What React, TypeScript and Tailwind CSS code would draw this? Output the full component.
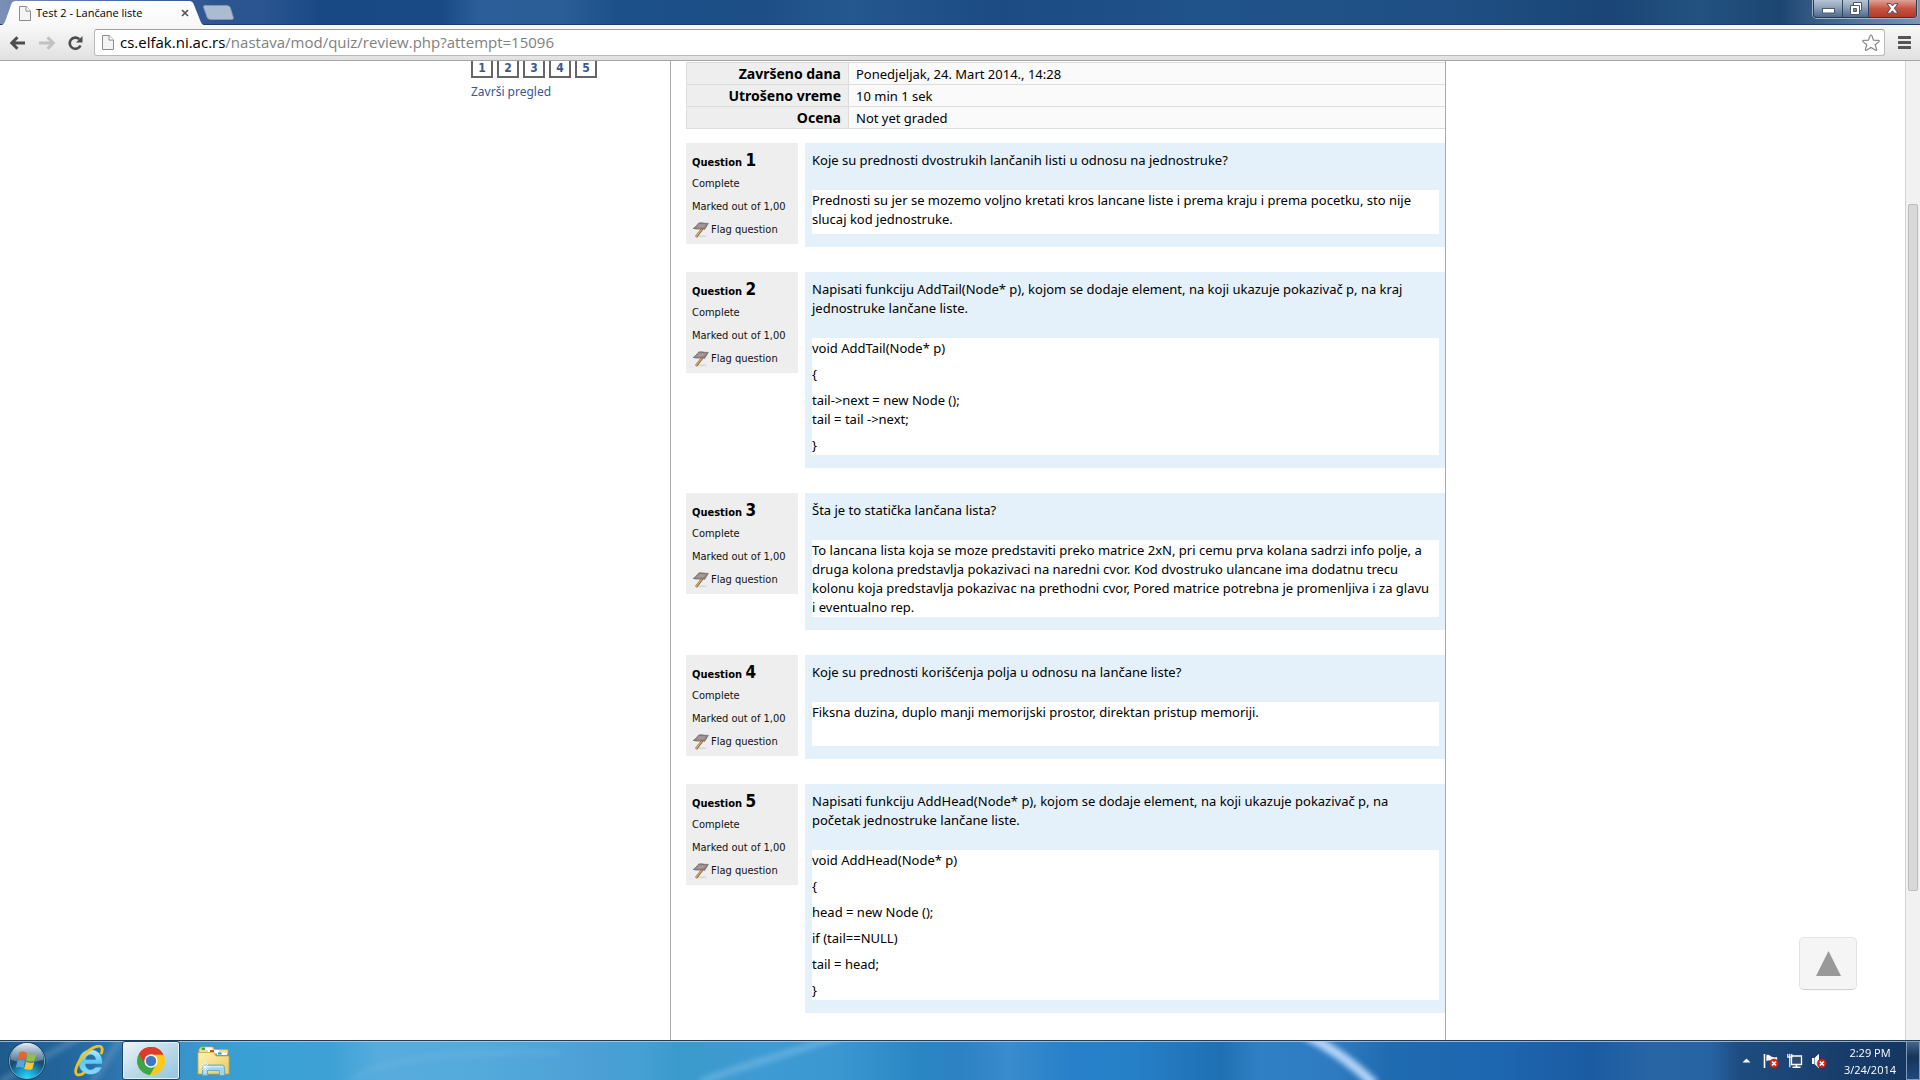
import React from 'react';

type Question = {
  number: number;
  prompt: string[];
  answer: string[][];
};

const summary = [
  { label: 'Završeno dana', value: 'Ponedjeljak, 24. Mart 2014., 14:28' },
  { label: 'Utrošeno vreme', value: '10 min 1 sek' },
  { label: 'Ocena', value: 'Not yet graded' },
];

const questions: Question[] = [
  {
    number: 1,
    prompt: ['Koje su prednosti dvostrukih lančanih listi u odnosu na jednostruke?'],
    answer: [
      [
        'Prednosti su jer se mozemo voljno kretati kros lancane liste i prema kraju i prema pocetku, sto nije',
        'slucaj kod jednostruke.',
      ],
    ],
  },
  {
    number: 2,
    prompt: [
      'Napisati funkciju AddTail(Node* p), kojom se dodaje element, na koji ukazuje pokazivač p, na kraj',
      'jednostruke lančane liste.',
    ],
    answer: [['void AddTail(Node* p)'], ['{'], ['tail->next = new Node ();', 'tail = tail ->next;'], ['}']],
  },
  {
    number: 3,
    prompt: ['Šta je to statička lančana lista?'],
    answer: [
      [
        'To lancana lista koja se moze predstaviti preko matrice 2xN, pri cemu prva kolana sadrzi info polje, a',
        'druga kolona predstavlja pokazivaci na naredni cvor. Kod dvostruko ulancane ima dodatnu trecu',
        'kolonu koja predstavlja pokazivac na prethodni cvor, Pored matrice potrebna je promenljiva i za glavu',
        'i eventualno rep.',
      ],
    ],
  },
  {
    number: 4,
    prompt: ['Koje su prednosti korišćenja polja u odnosu na lančane liste?'],
    answer: [['Fiksna duzina, duplo manji memorijski prostor, direktan pristup memoriji.']],
  },
  {
    number: 5,
    prompt: [
      'Napisati funkciju AddHead(Node* p), kojom se dodaje element, na koji ukazuje pokazivač p, na',
      'početak jednostruke lančane liste.',
    ],
    answer: [
      ['void AddHead(Node* p)'],
      ['{'],
      ['head = new Node ();'],
      ['if (tail==NULL)'],
      ['tail = head;'],
      ['}'],
    ],
  },
];

function Lines({ lines }: { lines: string[] }) {
  return (
    <p>
      {lines.map((line, i) => (
        <React.Fragment key={line}>
          {i > 0 && <br />}
          {line}
        </React.Fragment>
      ))}
    </p>
  );
}

function PageIcon() {
  return (
    <svg width="12" height="15" viewBox="0 0 12 15" className="shrink-0" aria-hidden="true">
      <path d="M.5.5h6.6l4.4 4.4v9.6H.5z" fill="#f4f4f4" stroke="#8c8c8c" />
      <path d="M7 .5v4.6h4.5" fill="#fff" stroke="#8c8c8c" />
    </svg>
  );
}

function FlagIcon() {
  return (
    <svg width="17" height="16" viewBox="0 0 17 16" className="shrink-0" aria-hidden="true">
      <ellipse cx="9" cy="14.3" rx="6" ry="1" fill="#d9d9d9" />
      <path d="M12 4.500 4 15" stroke="#8a5a2c" strokeWidth="2.400" />
      <path d="M11.800 4.500 3.800 14.800" stroke="#e0b078" strokeWidth="1.200" />
      <path d="M6.500 1.200C9 .2 12 1.600 16.300 1.400L12.600 7.400C10 6 7 8 1.200 6.400 3.500 5 5 3 6.500 1.200z" fill="#8d8480" stroke="#6a6260" strokeWidth=".7" />
      <path d="M7 2.200c2.500-.6 4.500.6 7 .4L11.500 5.500C9 4.600 7 6 4 5.600 5 4.600 6.200 3.300 7 2.200z" fill="#a39a95" />
    </svg>
  );
}

function TabBar() {
  return (
    <header className="relative flex h-[25px] items-stretch border-b border-[#1c3d66] bg-[linear-gradient(90deg,#7a90b6_0px,#4f73a8_90px,#2d5591_215px,#2b5590_260px,#194985_320px,#194a85_440px,#2c5f99_480px,#2b5e97_560px,#1c5089_620px,#1d4f86_760px,#25588f_850px,#1b4b82_1000px,#20538a_1200px,#1f4f84_1450px,#1a4576_1610px,#235280_1700px,#1c4672_1780px,#54779c_1860px,#7d95b0_1920px)]">
      <div className="relative h-[26px] w-[205px]">
        <svg width="205" height="26" viewBox="0 0 205 26" className="absolute inset-0" aria-hidden="true">
          <defs>
            <linearGradient id="tab" x1="0" y1="0" x2="0" y2="1">
              <stop offset="0" stopColor="#fff" />
              <stop offset="1" stopColor="#f8f8f8" />
            </linearGradient>
          </defs>
          <path d="M0 25.500C4 25 5 22 6 19L11 5C12 2 13 1 16 1h172c4 0 5 1 6 4l6 15c1 3 2 5 5 5.500z" fill="url(#tab)" />
        </svg>
        <div className="relative flex h-[26px] items-center pl-[19px]">
          <PageIcon />
          <span className="ml-[5px] font-['Open_Sans',sans-serif] text-[11px] leading-4 text-black">Test 2 - Lančane liste</span>
          <button aria-label="Close tab" className="mr-[16px] ml-auto">
            <svg width="8" height="8" viewBox="0 0 8 8" aria-hidden="true">
              <path d="m1 1 6 6m0-6L1 7" stroke="#555" strokeWidth="1.700" />
            </svg>
          </button>
        </div>
      </div>
      <button aria-label="New tab" className="-ml-[2px] self-center">
        <svg width="31" height="15" viewBox="0 0 31 15" aria-hidden="true">
          <path d="M2 .5h21c3 0 4 1 4.600 3l2.600 8.500c.5 2-.2 2.500-2 2.500H8c-2.500 0-3.500-.8-4.200-3L.6 2.500C.2 1 .8.500 2 .500z" fill="#abbbd0" stroke="#8398b5" strokeWidth=".8" />
        </svg>
      </button>
      <div className="mr-[3px] ml-auto flex h-[18px] overflow-hidden rounded-b-[4px] border border-t-0 border-[#2b3a4d] shadow-[0_0_0_1px_#9fb2c6]">
        <button aria-label="Minimize" className="flex w-[29px] items-center justify-center border-r border-[#34465c] bg-linear-to-b from-[#b7c5d5] via-[#8da1b9] via-45% to-[#4c6a8d]">
          <svg width="13" height="6" viewBox="0 0 13 6" className="mt-1" aria-hidden="true">
            <rect x=".5" y=".5" width="12" height="4.500" fill="#fff" stroke="#51586a" />
          </svg>
        </button>
        <button aria-label="Restore" className="flex w-[26px] items-center justify-center border-r border-[#34465c] bg-linear-to-b from-[#b7c5d5] via-[#8da1b9] via-45% to-[#4c6a8d]">
          <svg width="12" height="13" viewBox="0 0 12 13" aria-hidden="true">
            <path d="M3.500.5h8v8h-8z" fill="#fff" stroke="#51586a" />
            <path d="M.5 3.500h9v9h-9z" fill="#fff" stroke="#51586a" />
            <path d="M3.500 6.500h3v3h-3z" fill="#7b8ba3" stroke="#51586a" />
          </svg>
        </button>
        <button aria-label="Close" className="flex w-[47px] items-center justify-center bg-linear-to-b from-[#dba39b] via-[#c5543f] via-50% to-[#b5382a]">
          <svg width="13" height="11" viewBox="0 0 13 11" aria-hidden="true">
            <path d="M1 .7h3.600l1.900 2.200L8.400.7H12L8.400 5.300l3.600 4.900H8.400L6.500 7.800l-1.900 2.400H1l3.600-4.900z" fill="#fff" stroke="#51435a" />
          </svg>
        </button>
      </div>
    </header>
  );
}

function Toolbar() {
  return (
    <div className="flex h-[36px] items-center border-b border-[#a5a5a5] bg-linear-to-b from-[#f8f8f8] to-[#e1e1e1] pl-[9px]">
      <button aria-label="Back">
        <svg width="17" height="16" viewBox="0 0 17 16" aria-hidden="true">
          <path d="M16 8H3.500M8.500 2.300 2.800 8l5.700 5.700" fill="none" stroke="#4c4c4c" strokeWidth="3" />
        </svg>
      </button>
      <button aria-label="Forward" className="ml-[13px]">
        <svg width="17" height="16" viewBox="0 0 17 16" aria-hidden="true">
          <path d="M0 8h13.500M8.500 2.300 14.200 8l-5.700 5.700" fill="none" stroke="#c1c1c1" strokeWidth="3" />
        </svg>
      </button>
      <button aria-label="Reload" className="ml-[11px]">
        <svg width="17" height="16" viewBox="0 0 17 16" aria-hidden="true">
          <path d="M12.300 4.200A5.600 5.600 0 1 0 13.500 10.400" fill="none" stroke="#4c4c4c" strokeWidth="2.600" />
          <path d="M15.500 1v6.600H9z" fill="#4c4c4c" />
        </svg>
      </button>
      <div className="ml-[10px] flex h-[27px] flex-1 items-center rounded-[3px] border border-[#b8b8b8] border-t-[#9f9f9f] bg-white pl-[7px]">
        <PageIcon />
        <div className="relative ml-[6px] h-[22px] flex-1 font-['Open_Sans',sans-serif] text-[15px] leading-[20px]">
          <input aria-label="Address" defaultValue="cs.elfak.ni.ac.rs/nastava/mod/quiz/review.php?attempt=15096" className="h-[20px] w-full bg-transparent text-transparent caret-black outline-none" />
          <span aria-hidden="true" className="pointer-events-none absolute inset-0 whitespace-nowrap text-[#808080]">
            <span className="text-black">cs.elfak.ni.ac.rs</span>/nastava/mod/quiz/review.php?attempt=15096
          </span>
        </div>
        <button aria-label="Bookmark this page" className="mr-[4px]">
          <svg width="18" height="18" viewBox="0 0 18 18" aria-hidden="true">
            <path d="M9 1c.5 0 .8.4 1 .9l1.500 4.300 4.700.1c1.200 0 1.400.9.600 1.600l-3.600 2.800 1.300 4.500c.3 1.100-.4 1.500-1.300.9L9 13.400l-4.200 2.700c-.9.600-1.600.2-1.300-.9l1.300-4.500L1.200 7.900C.4 7.200.6 6.300 1.800 6.300l4.700-.1L8 1.900c.2-.5.500-.9 1-.9z" fill="#fff" stroke="#868686" strokeWidth="1.200" />
          </svg>
        </button>
      </div>
      <button aria-label="Menu" className="mr-[9px] ml-[13px]">
        <svg width="13" height="13" viewBox="0 0 13 13" aria-hidden="true">
          <path d="M1 1.500h11M1 6.500h11M1 11.500h11" stroke="#555" strokeWidth="3" strokeLinecap="round" />
        </svg>
      </button>
    </div>
  );
}

function QuestionRow({ question }: { question: Question }) {
  return (
    <section className="mb-[25px] flex items-start gap-[7px]">
      <div className="w-[112px] shrink-0 bg-[#eee] px-[6px] pt-[6px] pb-[3px] font-['DejaVu_Sans_Condensed','DejaVu_Sans',sans-serif] text-[11px] leading-[23px] text-[#111]">
        <h3 className="h-[23px] font-bold text-black">
          Question <span className="text-[17px]">{question.number}</span>
        </h3>
        <p>Complete</p>
        <p className="whitespace-nowrap">Marked out of 1,00</p>
        <a href="#flag" className="flex items-center gap-[2px]">
          <FlagIcon />
          Flag question
        </a>
      </div>
      <div className="min-w-0 flex-1 bg-[#e4f1fa] pt-[8px] pr-[6px] pb-[13px] pl-[7px] leading-[19px]">
        <Lines lines={question.prompt} />
        <div className="mt-[20px] min-h-[44px] space-y-[7px] bg-white pt-px">
          {question.answer.map((lines) => (
            <Lines key={lines[0]} lines={lines} />
          ))}
        </div>
      </div>
    </section>
  );
}

function Page() {
  return (
    <div className="relative flex min-h-0 flex-1 overflow-hidden bg-white font-['Noto_Sans',sans-serif] text-[13px] text-black">
      <div className="min-w-0 flex-1">
        <div className="mx-auto flex min-h-full w-full max-w-[987px]">
          <aside className="w-[211px] shrink-0 pl-3 text-[#3a5795]">
            <nav aria-label="Questions" className="flex gap-[4px] font-['DejaVu_Sans_Condensed','DejaVu_Sans',sans-serif] text-[12px] font-bold">
              {questions.map((q) => (
                <a key={q.number} href={`#q${q.number}`} className="h-[17px] w-[22px] border-2 border-t-0 border-[#666] text-center leading-[15px]">
                  {q.number}
                </a>
              ))}
            </nav>
            <a href="#finish" className="mt-[5px] inline-block text-[12px] leading-[18px]">
              Završi pregled
            </a>
          </aside>
          <main className="min-w-0 flex-1 border-x border-[#aaa] pt-px pl-[15px]">
            <table className="mb-[14px] w-full border-collapse">
              <tbody>
                {summary.map((row) => (
                  <tr key={row.label} className="h-[22px] border-y border-[#ddd] leading-[19px]">
                    <th scope="row" className="w-[162px] border-x border-[#ddd] bg-[#eee] p-0 pr-[7px] text-right text-[14px] font-bold">
                      {row.label}
                    </th>
                    <td className="bg-[#fafafa] p-0 pt-px pl-[7px]">{row.value}</td>
                  </tr>
                ))}
              </tbody>
            </table>
            {questions.map((q) => (
              <QuestionRow key={q.number} question={q} />
            ))}
          </main>
        </div>
      </div>
      <div className="flex w-[15px] shrink-0 flex-col border-l border-[#d2d2d2] bg-[#f1f1f1] px-[2px]">
        <div className="flex-[143]" />
        <div className="flex-[687] rounded-[2px] border border-[#bcbcbc] bg-[#d9d9d9]" />
        <div className="flex-[149]" />
      </div>
      <button aria-label="Back to top" className="absolute right-[63px] bottom-[50px] flex h-[53px] w-[58px] items-center justify-center rounded-[5px] border border-[#e3e3e3] border-b-[#d0d0d0] bg-[#f5f5f5]">
        <svg width="25" height="25" viewBox="0 0 25 25" aria-hidden="true">
          <path d="M12.500 0 25 25H0z" fill="#999" />
        </svg>
      </button>
    </div>
  );
}

function StartOrb() {
  return (
    <svg width="38" height="38" viewBox="0 0 38 38" aria-hidden="true">
      <defs>
        <radialGradient id="orb" cx=".5" cy="1" r=".9">
          <stop offset="0" stopColor="#25e4ff" />
          <stop offset=".3" stopColor="#1aa0d0" />
          <stop offset=".65" stopColor="#17496f" />
          <stop offset="1" stopColor="#3a5d7a" />
        </radialGradient>
        <linearGradient id="shine" x1="0" y1="0" x2="0" y2="1">
          <stop offset="0" stopColor="#e4edf4" />
          <stop offset="1" stopColor="#8fa9bd" stopOpacity=".45" />
        </linearGradient>
      </defs>
      <circle cx="19" cy="19" r="17.700" fill="url(#orb)" stroke="#7fb2cf" />
      <circle cx="19" cy="19" r="18.500" fill="none" stroke="#143f63" strokeWidth=".8" />
      <path d="M2.500 17.500a16.500 16.500 0 0 1 33 0c-10 4-23 4-33 0z" fill="url(#shine)" />
      <path d="M11.500 10.500c3-1.500 5-1 7.500.5l-1.700 7c-2.500-1.500-4.700-1.800-7.500-.5z" fill="#ec6327" />
      <path d="M20 11.500c3 1.500 5.300 1.500 8.300.2l-1.800 7c-2.800 1.200-5.200 1-8.200-.2z" fill="#8fc23e" />
      <path d="M9.500 18.800c3-1.300 5-1 7.500.5l-1.700 7c-2.500-1.600-4.800-1.700-7.500-.5z" fill="#54a5dc" />
      <path d="M18 19.800c3 1.300 5.300 1.400 8.200.2l-1.800 7c-2.700 1.300-5.200 1-8.200-.3z" fill="#fdc534" />
    </svg>
  );
}

function ExplorerE() {
  return (
    <svg width="31" height="32" viewBox="0 0 31 32" aria-hidden="true">
      <defs>
        <linearGradient id="ie" x1="0" y1="0" x2="0" y2="1">
          <stop offset="0" stopColor="#b6ecfd" />
          <stop offset=".5" stopColor="#5cc9f5" />
          <stop offset="1" stopColor="#8adcf9" />
        </linearGradient>
      </defs>
      <path d="M28.500 19H11.500c.2 3.500 2.300 5.500 5.200 5.500 2.300 0 3.900-.9 4.700-2.500h6.500c-1.500 4.700-5.600 7.500-11.200 7.500C9.500 29.500 4.500 24.300 4.500 17.200S9.700 4.500 16.700 4.500 28.800 9.800 28.500 19zm-6.900-4.500c-.3-3-2.200-4.700-4.900-4.700-2.800 0-4.700 1.700-5.100 4.700z" fill="url(#ie)" stroke="#2784bd" strokeWidth=".6" />
      <path d="M27.500 8c1.500-4 .5-6.500-2-6.800C20 .8 11 7 6 15 1.500 22 .5 28 3 29.500c1.500.8 4 .2 6.500-1.300" fill="none" stroke="#f2c21b" strokeWidth="2.800" strokeLinecap="round" />
    </svg>
  );
}

function BrowserIcon() {
  return (
    <svg width="28" height="28" viewBox="0 0 28 28" aria-hidden="true">
      <circle cx="14" cy="14" r="14" fill="#fcc918" />
      <path d="M1.900 7A14 14 0 0 1 26.400 7.500H14a6.500 6.500 0 0 0-6 4z" fill="#dd3a2c" />
      <path d="M1.900 7A14 14 0 0 0 13 28l6.300-10.800A6.500 6.500 0 0 1 8.400 17.200L2.400 6.300z" fill="#3aa648" />
      <path d="M1.900 7.100 8 17.500l.2-6.200L14 7.500h12.400A14 14 0 0 0 1.900 7.100z" fill="#dd3a2c" />
      <circle cx="14" cy="14" r="6.700" fill="#f5f8fa" />
      <circle cx="14" cy="14" r="5.200" fill="#3f79c2" />
    </svg>
  );
}

function FolderIcon() {
  return (
    <svg width="33" height="30" viewBox="0 0 33 30" aria-hidden="true">
      <defs>
        <linearGradient id="folder" x1="0" y1="0" x2="1" y2="1">
          <stop offset="0" stopColor="#fff3b8" />
          <stop offset="1" stopColor="#e8c95e" />
        </linearGradient>
      </defs>
      <path d="M2 3.500 4 1h12l1.500 2.500H31V8H2z" fill="#f3dd8c" stroke="#c9a548" strokeWidth=".8" />
      <path d="M4.500 1.500H15V4H4.500z" fill="#fff" />
      <path d="M4.500 1.500h3.500V4H4.500z" fill="#27b53c" />
      <path d="M11 4h11v3H11z" fill="#fff" />
      <path d="M13 4h4v2h-4z" fill="#dd4a2f" />
      <path d="M1 6.500h16l2 3.500h13v18H1z" fill="url(#folder)" stroke="#c9a548" strokeWidth=".8" />
      <path d="M20 6.500h10V9H20z" fill="#fff" />
      <path d="M21 6.500h3.500V8.500H21z" fill="#2493d1" />
      <path d="M5.500 29.500v-8c0-1.500 1-2.500 2.500-2.500h17c1.500 0 2.500 1 2.500 2.500v8h-5v-5h-12v5z" fill="#9fd5ee" stroke="#5e9fc0" strokeWidth=".8" />
      <path d="M7 20.800h19" stroke="#e3f6fd" />
      <path d="M8 15v12M3 21h10M5 18l6 6m0-6-6 6" stroke="#fff" strokeWidth=".7" />
    </svg>
  );
}

function ErrorBadge({ x, y }: { x: number; y: number }) {
  return (
    <g>
      <circle cx={x} cy={y} r="4.600" fill="#d9261c" stroke="#8f1c16" strokeWidth=".5" />
      <path d={`M${x - 2} ${y - 2}l4 4m0-4l-4 4`} stroke="#fff" strokeWidth="1.600" />
    </g>
  );
}

function Taskbar() {
  return (
    <footer className="relative flex h-[40px] items-center overflow-hidden border-t border-[#1f3c5c] bg-[linear-gradient(90deg,#1f5a8c_0px,#22659b_60px,#2c72ab_110px,#3993ca_180px,#39a0d3_240px,#3ea1d6_330px,#57acdd_380px,#55aadc_480px,#4b9fd5_600px,#45a0d2_640px,#3a9acb_680px,#3f9bd3_760px,#3b97d0_840px,#2a86c3_920px,#2d82c4_960px,#398ccd_1010px,#2780c9_1070px,#2680c8_1130px,#1f70b3_1220px,#2f80c4_1260px,#2e7ac0_1340px,#1f6bb0_1390px,#1d66b0_1500px,#1b5ba2_1590px,#2765a5_1650px,#2663a3_1710px,#1e4c80_1740px,#183c69_1850px,#133660_1920px)]">
      <svg viewBox="0 0 1920 40" preserveAspectRatio="none" className="absolute inset-0 h-full w-full" aria-hidden="true">
        <defs>
          <filter id="soft" x="-10%" y="-50%" width="120%" height="200%">
            <feGaussianBlur stdDeviation="3" />
          </filter>
        </defs>
        <g filter="url(#soft)">
          <path d="M1306-6c24 12 46 28 68 50" fill="none" stroke="#b4d4f8" strokeWidth="10" />
          <path d="M0 42 80-4M92 42l30-46" stroke="#8fb8d8" strokeWidth="6" opacity=".35" />
          <path d="M700 42Q760 20 840-4" fill="none" stroke="#8cc8ee" strokeWidth="8" opacity=".4" />
          <path d="M350 42Q390 8 560 12" fill="none" stroke="#8cc8ee" strokeWidth="8" opacity=".15" />
        </g>
        <path d="M0 .5h1920" stroke="#bcd6ea" strokeWidth="1" opacity=".75" />
      </svg>
      <button aria-label="Start" className="relative ml-[8px]">
        <StartOrb />
      </button>
      <button aria-label="Internet Explorer" className="relative ml-[28px]">
        <ExplorerE />
      </button>
      <button aria-label="Chrome" className="relative ml-[17px] flex h-[39px] w-[58px] items-center justify-center rounded-[3px] border border-[#1d4566] bg-linear-to-br from-[#f0f5f8] via-[#bddaea] to-[#8fc4e0] shadow-[inset_0_0_0_1px_#e6f2f9]">
        <BrowserIcon />
      </button>
      <button aria-label="File Explorer" className="relative ml-[17px]">
        <FolderIcon />
      </button>
      <div className="relative ml-auto flex h-full items-center text-white">
        <button aria-label="Show hidden icons">
          <svg width="9" height="5" viewBox="0 0 9 5" aria-hidden="true">
            <path d="M4.500.500 8.500 4.500h-8z" fill="#fff" />
          </svg>
        </button>
        <button aria-label="Action Center" className="ml-[12px]">
          <svg width="16" height="16" viewBox="0 0 16 16" aria-hidden="true">
            <path d="M1.500 1v14" stroke="#fff" strokeWidth="1.600" />
            <path d="M3 2c3-1.500 4 1 6 1.500s3 .8 5.500.2V9c-3 1-4.500 0-6-.7S5 7.500 3 8.500z" fill="#fff" stroke="#1a3350" strokeWidth=".6" />
            <ErrorBadge x={11} y={10.500} />
          </svg>
        </button>
        <button aria-label="Network" className="ml-[8px]">
          <svg width="16" height="16" viewBox="0 0 16 16" aria-hidden="true">
            <path d="M4.500 3h10v8.500h-10z" fill="#2b4c6c" stroke="#fff" strokeWidth="1.300" />
            <path d="M9.500 11.500V14M5.500 14.300h8" stroke="#fff" strokeWidth="1.600" />
            <path d="M.8 1v3.200h4V1M2.800.8v3M2.800 4.500v9.800" fill="none" stroke="#fff" strokeWidth="1.200" />
          </svg>
        </button>
        <button aria-label="Volume" className="ml-[8px]">
          <svg width="16" height="16" viewBox="0 0 16 16" aria-hidden="true">
            <path d="M1 5h2v6H1zM3.500 5 8 .8v14.400L3.500 11z" fill="#fff" />
            <ErrorBadge x={10.800} y={10.500} />
          </svg>
        </button>
        <time className="ml-[16px] w-[54px] text-center font-['Open_Sans',sans-serif] text-[11px] leading-[17px]">
          2:29 PM
          <br />
          3/24/2014
        </time>
        <button aria-label="Show desktop" className="ml-[9px] h-full w-[14px] border border-[#7f9cbb] bg-linear-to-b from-[#45658a] via-[#173459] via-40% to-[#1f4a80]" />
      </div>
    </footer>
  );
}

export default function App() {
  return (
    <div className="flex h-screen flex-col overflow-hidden">
      <TabBar />
      <Toolbar />
      <Page />
      <Taskbar />
    </div>
  );
}
